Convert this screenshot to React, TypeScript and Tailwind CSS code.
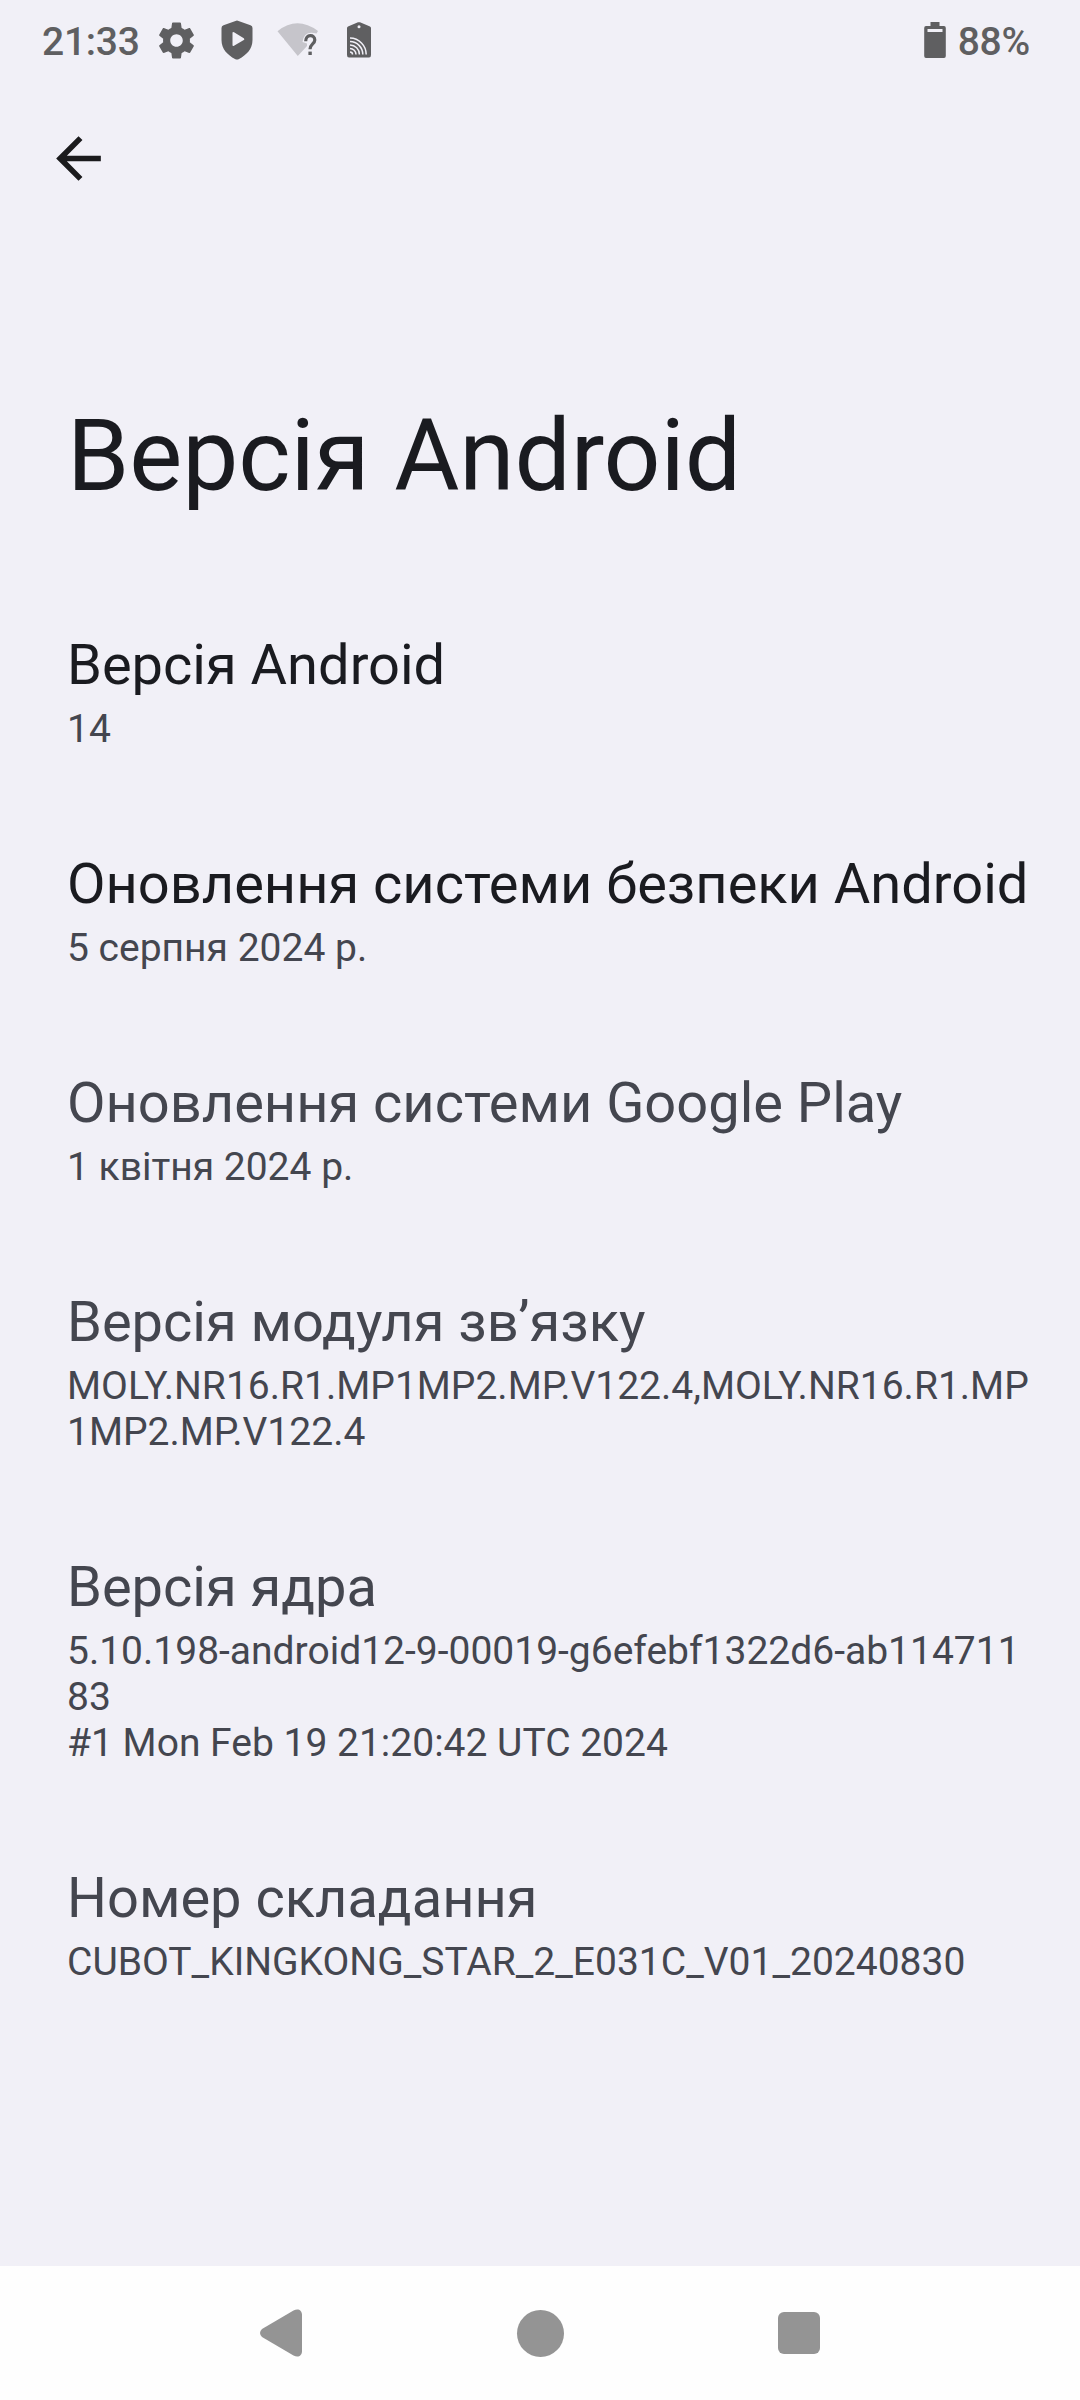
import type { ReactNode } from 'react';

interface InfoItem {
  title: string;
  lines: string[];
  clickable?: boolean;
}

const items: InfoItem[] = [
  { title: 'Версія Android', lines: ['14'], clickable: true },
  { title: 'Оновлення системи безпеки Android', lines: ['5 серпня 2024 р.'], clickable: true },
  { title: 'Оновлення системи Google Play', lines: ['1 квітня 2024 р.'] },
  { title: 'Версія модуля зв’язку', lines: ['MOLY.NR16.R1.MP1MP2.MP.V122.4,MOLY.NR16.R1.MP', '1MP2.MP.V122.4'] },
  {
    title: 'Версія ядра',
    lines: ['5.10.198-android12-9-00019-g6efebf1322d6-ab114711', '83', '#1 Mon Feb 19 21:20:42 UTC 2024'],
  },
  { title: 'Номер складання', lines: ['CUBOT_KINGKONG_STAR_2_E031C_V01_20240830'] },
];

function GearIcon() {
  return (
    <svg className="ml-[15px] h-[43px] w-[43px]" viewBox="0 0 24 24" fill="currentColor">
      <path d="M19.43 12.98c.04-.32.07-.64.07-.98s-.03-.66-.07-.98l2.11-1.65c.19-.15.24-.42.12-.64l-2-3.46c-.12-.22-.39-.3-.61-.22l-2.49 1c-.52-.4-1.08-.73-1.69-.98l-.38-2.65C14.46 2.18 14.25 2 14 2h-4c-.25 0-.46.18-.49.42l-.38 2.65c-.61.25-1.17.59-1.69.98l-2.49-1c-.23-.09-.49 0-.61.22l-2 3.46c-.13.22-.07.49.12.64l2.11 1.65c-.04.32-.07.65-.07.98s.03.66.07.98l-2.11 1.65c-.19.15-.24.42-.12.64l2 3.46c.12.22.39.3.61.22l2.49-1c.52.4 1.08.73 1.69.98l.38 2.65c.03.24.24.42.49.42h4c.25 0 .46-.18.49-.42l.38-2.65c.61-.25 1.17-.59 1.69-.98l2.49 1c.23.09.49 0 .61-.22l2-3.46c.12-.22.07-.49-.12-.64l-2.11-1.65zM12 15.5c-1.93 0-3.5-1.57-3.5-3.5s1.57-3.5 3.5-3.5 3.5 1.57 3.5 3.5-1.57 3.5-3.5 3.5z" />
    </svg>
  );
}

function ShieldPlayIcon() {
  return (
    <svg className="ml-[23px] h-10 w-8" viewBox="0 0 32 40" fill="currentColor" fillRule="evenodd">
      <path d="M14.500 .9Q16 .3 17.500 .9L29.500 5.200Q31.500 6 31.500 8V20C31.500 29 25.500 35 18 39Q16 40 14 39C6.500 35 .5 29 .5 20V8Q.5 6 2.500 5.200ZM11.500 13V25Q11.500 26.500 13 25.700L22.800 20Q24 19.200 22.800 18.300L13 12.300Q11.500 11.500 11.500 13Z" />
    </svg>
  );
}

function WifiUnknownIcon() {
  return (
    <svg className="ml-6 h-10 w-[43px]" viewBox="0 0 43 40">
      <path d="M.5 11.200Q20 -4.500 41 11L39.500 13.500Q27 10 25.500 22L30 23.500V26L20.800 36Z" fill="#c6c5cb" />
      <path d="M28.700 21.300C28.700 14 37.800 14 37.800 20C37.800 24 33 24 33 29.300" fill="none" stroke="currentColor" strokeWidth="3.200" />
      <path d="M31.400 31.600h3.400v3.400h-3.400z" fill="currentColor" />
    </svg>
  );
}

function NfcTagIcon() {
  return (
    <svg className="ml-[27px] h-9 w-6" viewBox="0 0 24 36">
      <path d="M0 6Q0 5 1 4.500L11 .3Q12 0 13 .3L23 4.500Q24 5 24 6V33Q24 35.500 22 35.500H2Q0 35.500 0 33Z" fill="currentColor" />
      <circle cx="12" cy="4.700" r="1.500" fill="#f1f0f7" />
      <path d="M3 16A16.500 16.500 0 0 1 19.200 32.500M3 19.500A13 13 0 0 1 15.800 32.500M3 23A9.500 9.500 0 0 1 12.400 32.500M3 26.500A6 6 0 0 1 9 32.500M3 30A2.500 2.500 0 0 1 5.500 32.500" fill="none" stroke="#f1f0f7" strokeWidth="1.500" />
    </svg>
  );
}

function BatteryIcon() {
  return (
    <svg className="mr-[12px] h-9 w-[22px]" viewBox="0 0 22 36" fill="currentColor" fillRule="evenodd">
      <path d="M6.500 0H15.500V4H20Q21.800 4 21.800 6V34Q21.800 36 20 36H2Q.2 36 .2 34V6Q.2 4 2 4H6.500ZM3.500 7V10H18.500V7Z" />
    </svg>
  );
}

function StatusBar() {
  return (
    <header className="flex h-20 items-center justify-between pr-[50px] pl-[42px] text-[39px] leading-[46px] font-medium tracking-[-0.25px] text-[#5f5f61]">
      <div className="flex items-center">
        <span className="w-[98px] pt-[3px]">21:33</span>
        <GearIcon />
        <ShieldPlayIcon />
        <WifiUnknownIcon />
        <NfcTagIcon />
      </div>
      <div className="flex items-center">
        <BatteryIcon />
        <span className="pt-[3px]">88%</span>
      </div>
    </header>
  );
}

function NavButton({ label, children }: { label: string; children: ReactNode }) {
  return (
    <button aria-label={label} className="flex h-[60px] w-[60px] items-center justify-center">
      {children}
    </button>
  );
}

function NavigationBar() {
  return (
    <nav className="flex h-[134px] items-center justify-center gap-[199px] bg-[#fefefe] text-[#949494]">
      <NavButton label="Назад">
        <svg className="h-12 w-[42px]" viewBox="0 0 42 48" fill="currentColor">
          <path d="M2 20 33.500 1.500C38 -1 42 1 42 6V42C42 47 38 49 33.500 46.500L2 28Q-2 24 2 20Z" />
        </svg>
      </NavButton>
      <NavButton label="Головний екран">
        <span className="h-[47px] w-[47px] rounded-full bg-current" />
      </NavButton>
      <NavButton label="Огляд">
        <span className="h-[42px] w-[42px] rounded-[6px] bg-current" />
      </NavButton>
    </nav>
  );
}

export default function App() {
  return (
    <div className="flex h-[2400px] w-[1080px] flex-col bg-[#f1f0f7] font-[Roboto,sans-serif]">
      <StatusBar />
      <button aria-label="Назад" className="mt-[45px] ml-[45px] flex h-[67px] w-[67px] items-center justify-center text-[#1b1b1d]">
        <svg className="h-[67px] w-[67px]" viewBox="0 0 24 24" fill="currentColor">
          <path d="M20 11H7.830l5.590-5.590L12 4l-8 8 8 8 1.410-1.410L7.830 13H20v-2z" />
        </svg>
      </button>
      <main className="flex-1 px-[67px]">
        <h1 className="mt-[204px] text-[100px] leading-[120px] tracking-[-0.1px] text-[#1a1b20]">Версія Android</h1>
        <div className="mt-[116px] flex flex-col gap-[99px]">
          {items.map((item) => (
            <section key={item.title}>
              <h2 className={`text-[56px] leading-[66px] whitespace-nowrap ${item.clickable ? 'text-[#1a1b20]' : 'text-[#44464f]'}`}>
                {item.title}
              </h2>
              <div className="mt-2 text-[39px] leading-[46px] whitespace-nowrap text-[#44464f]">
                {item.lines.map((line) => (
                  <p key={line}>{line}</p>
                ))}
              </div>
            </section>
          ))}
        </div>
      </main>
      <NavigationBar />
    </div>
  );
}
